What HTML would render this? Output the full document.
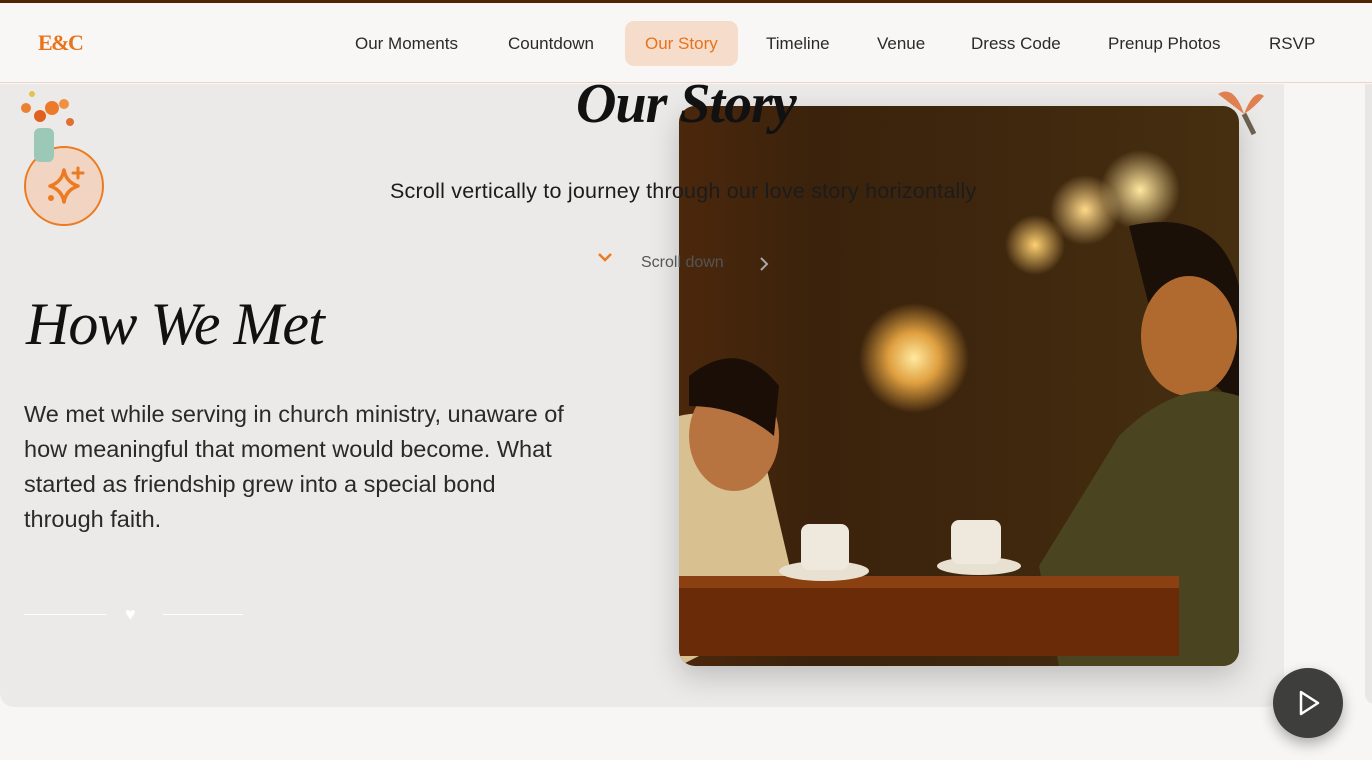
<!DOCTYPE html>
<html><head><meta charset="utf-8"><style>
*{margin:0;padding:0;box-sizing:border-box}
body{width:1372px;height:760px;overflow:hidden;background:#f7f6f4;font-family:"Liberation Sans",sans-serif;position:relative}
.top{position:absolute;left:0;top:0;width:1372px;height:3px;background:#4f2600}
nav{position:absolute;left:0;top:3px;width:1372px;height:80px;background:#f8f7f5;border-bottom:1px solid #f0d3c0;z-index:5}
.logo{position:absolute;left:38px;top:27px;font-family:"Liberation Serif",serif;font-weight:bold;color:#e8731a;font-size:22px;letter-spacing:-1.5px}
.nav a{position:absolute;top:18px;height:45px;line-height:45px;font-size:17px;color:#2a2a2a;text-decoration:none}
.nav a.on{background:#f6dccb;color:#e8731a;border-radius:9px;padding:0 20px}
.panel{position:absolute;left:0;top:84px;width:1284px;height:623px;background:#ebeae9;border-radius:0 0 18px 14px}
.strip{position:absolute;left:1365px;top:84px;width:10px;height:620px;background:#e8e7e6;border-radius:0 0 0 14px}
h1{position:absolute;left:576px;top:72px;font-family:"Liberation Serif",serif;font-style:italic;font-weight:bold;font-size:56px;color:#111;z-index:3;letter-spacing:-1px}
.sub{position:absolute;left:390px;top:179px;font-size:21.5px;letter-spacing:0.22px;color:#1c1c1c;z-index:3;white-space:nowrap}
.scroll{position:absolute;left:641px;top:254px;font-size:16px;color:#555;z-index:3}
.badge{position:absolute;left:24px;top:146px;width:80px;height:80px;border-radius:50%;border:2px solid #ed7a20;background:#f1d4c1}
h2{position:absolute;left:26px;top:290px;font-family:"Liberation Serif",serif;font-style:italic;font-size:60px;font-weight:normal;color:#111;letter-spacing:-1px}
.p{position:absolute;left:24px;top:397px;width:552px;font-size:23.5px;line-height:35px;color:#2a2a2a}
.ln{position:absolute;top:614px;height:1px;width:80px;background:#fff}
.photo{position:absolute;left:679px;top:106px;width:560px;height:560px;border-radius:16px;overflow:hidden;box-shadow:0 10px 30px rgba(0,0,0,.2);
background:radial-gradient(circle at 914px 358px,#ffe9a0 0,#e0a040 25px,transparent 55px),
radial-gradient(circle 40px at 1140px 190px,#ffe7a0,transparent),
radial-gradient(circle 35px at 1085px 210px,#ffd888,transparent),
radial-gradient(circle 30px at 1035px 245px,#ffd070,transparent),
linear-gradient(90deg,#4a2208 0,#6a320c 30%,#3a220c 60%,#4a3212 100%);background-attachment:fixed}
.play{position:absolute;left:1273px;top:668px;width:70px;height:70px;border-radius:50%;background:#3e3e3c;box-shadow:0 6px 14px rgba(0,0,0,.3)}
</style></head><body>
<div class="top"></div>
<nav><div class="logo">E&amp;C</div>
<div class="nav">
<a style="left:355px">Our Moments</a><a style="left:508px">Countdown</a><a class="on" style="left:625px">Our Story</a><a style="left:766px">Timeline</a><a style="left:877px">Venue</a><a style="left:971px">Dress Code</a><a style="left:1108px">Prenup Photos</a><a style="left:1269px">RSVP</a></div></nav>
<div class="panel"></div><div class="strip"></div>
<div class="photo">
<svg width="560" height="560" style="position:absolute;left:0;top:0">
<path d="M0 310 Q40 300 80 330 L120 500 L0 560Z" fill="#d8c090"/>
<ellipse cx="55" cy="330" rx="45" ry="55" fill="#b87440"/>
<path d="M10 270 Q60 230 100 280 L95 330 Q60 300 10 300Z" fill="#1a0e06"/>
<path d="M450 120 Q540 100 560 180 L560 300 Q500 250 470 200Z" fill="#1a1008"/>
<ellipse cx="510" cy="230" rx="48" ry="60" fill="#b06a30"/>
<path d="M440 330 Q500 270 560 290 L560 560 L380 560 L360 460Z" fill="#4a4520"/>
<rect x="0" y="470" width="500" height="80" fill="#6a2c08"/>
<rect x="0" y="470" width="500" height="12" fill="#8a4010"/>
<ellipse cx="145" cy="465" rx="45" ry="10" fill="#e8e0d0"/>
<rect x="122" y="418" width="48" height="46" rx="8" fill="#efe8dc"/>
<ellipse cx="300" cy="460" rx="42" ry="9" fill="#e8e0d0"/>
<rect x="272" y="414" width="50" height="44" rx="8" fill="#efe8dc"/>
</svg></div>
<h1>Our Story</h1>
<div class="sub">Scroll vertically to journey through our love story horizontally</div>
<svg style="position:absolute;left:597px;top:251px" width="16" height="12"><path d="M2 3 L8 9 L14 3" stroke="#ed7a20" stroke-width="2.5" fill="none"/></svg>
<div class="scroll">Scroll down</div>
<svg style="position:absolute;left:758px;top:256px;z-index:3" width="12" height="16"><path d="M3 2 L9 8 L3 14" stroke="#aaa" stroke-width="2" fill="none"/></svg>
<div class="badge"><svg width="76" height="76" viewBox="0 0 76 76"><path d="M38 22 Q40 34 52 38 Q40 42 38 54 Q36 42 24 38 Q36 34 38 22Z" stroke="#ed7a20" stroke-width="3.5" fill="none" stroke-linejoin="round"/><path d="M52 20v10M47 25h10" stroke="#ed7a20" stroke-width="3" stroke-linecap="round"/><circle cx="25" cy="50" r="3" fill="#ed7a20"/></svg></div>
<svg style="position:absolute;left:12px;top:84px" width="66" height="80"><rect x="22" y="44" width="20" height="34" rx="6" fill="#9cc8b8"/><circle cx="40" cy="24" r="7" fill="#ec7a28"/><circle cx="28" cy="32" r="6" fill="#e06020"/><circle cx="52" cy="20" r="5" fill="#f09040"/><circle cx="14" cy="24" r="5" fill="#ec8030"/><circle cx="58" cy="38" r="4" fill="#e07030"/><circle cx="20" cy="10" r="3" fill="#e8c050"/></svg>
<svg style="position:absolute;left:1214px;top:84px" width="54" height="58"><path d="M4 10 Q20 0 30 30 Q40 4 50 12 Q40 24 30 30Z" fill="#e08050"/><path d="M30 30 L40 50" stroke="#6a6050" stroke-width="5"/></svg>
<h2>How We Met</h2>
<div class="p">We met while serving in church ministry, unaware of how meaningful that moment would become. What started as friendship grew into a special bond through faith.</div>
<div class="ln" style="left:24px;width:82px"></div><div class="ln" style="left:163px"></div>
<div style="position:absolute;left:125px;top:604px;color:#fff;font-size:18px">♥</div>
<div class="play"><svg width="70" height="70"><path d="M28 24 L45 35 L28 46Z" stroke="#fff" stroke-width="2.5" fill="none" stroke-linejoin="round"/></svg></div>
</body></html>
